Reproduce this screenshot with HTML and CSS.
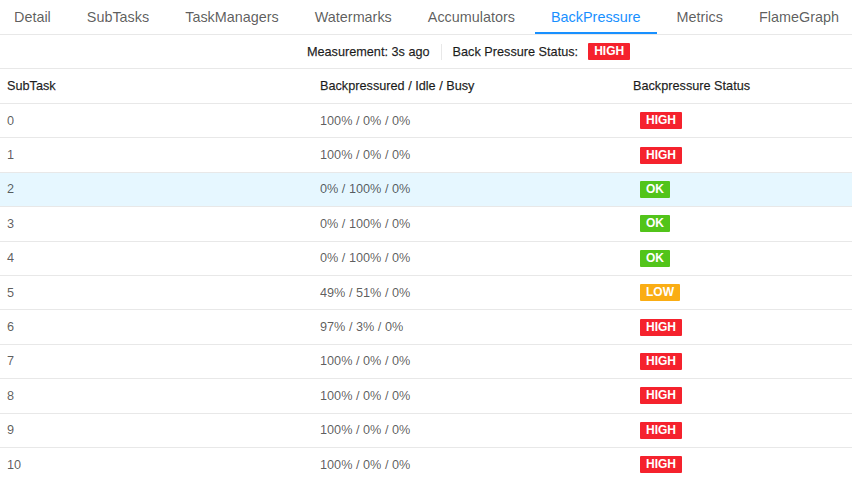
FILE: index.html
```html
<!DOCTYPE html>
<html lang="en">
<head>
    <meta charset="UTF-8">
    <title>BackPressure</title>
    <link rel="stylesheet" href="styles.css">
</head>
<body>
    <div class="tabs">
        <div class="tab">Detail</div>
        <div class="tab">SubTasks</div>
        <div class="tab">TaskManagers</div>
        <div class="tab">Watermarks</div>
        <div class="tab">Accumulators</div>
        <div class="tab active">BackPressure</div>
        <div class="tab">Metrics</div>
        <div class="tab">FlameGraph</div>
    </div>

    <div class="summary">
        <span class="summary-item">Measurement: 3s ago</span>
        <span class="divider"></span>
        <span class="summary-item">Back Pressure Status:</span>
        <span class="tag high">HIGH</span>
    </div>

    <table class="bp-table">
        <thead>
            <tr>
                <th>SubTask</th>
                <th>Backpressured / Idle / Busy</th>
                <th>Backpressure Status</th>
            </tr>
        </thead>
        <tbody>
            <tr><td>0</td><td>100% / 0% / 0%</td><td><span class="tag high">HIGH</span></td></tr>
            <tr><td>1</td><td>100% / 0% / 0%</td><td><span class="tag high">HIGH</span></td></tr>
            <tr class="hover"><td>2</td><td>0% / 100% / 0%</td><td><span class="tag ok">OK</span></td></tr>
            <tr><td>3</td><td>0% / 100% / 0%</td><td><span class="tag ok">OK</span></td></tr>
            <tr><td>4</td><td>0% / 100% / 0%</td><td><span class="tag ok">OK</span></td></tr>
            <tr><td>5</td><td>49% / 51% / 0%</td><td><span class="tag low">LOW</span></td></tr>
            <tr><td>6</td><td>97% / 3% / 0%</td><td><span class="tag high">HIGH</span></td></tr>
            <tr><td>7</td><td>100% / 0% / 0%</td><td><span class="tag high">HIGH</span></td></tr>
            <tr><td>8</td><td>100% / 0% / 0%</td><td><span class="tag high">HIGH</span></td></tr>
            <tr><td>9</td><td>100% / 0% / 0%</td><td><span class="tag high">HIGH</span></td></tr>
            <tr><td>10</td><td>100% / 0% / 0%</td><td><span class="tag high">HIGH</span></td></tr>
        </tbody>
    </table>
</body>
</html>
```

FILE: styles.css
```css
body {
    font-family: "Liberation Sans", Arial, sans-serif;
    font-size: 12.7px;
    margin: 0;
    background-color: #fff;
    color: rgba(0,0,0,0.65);
}
.tabs {
    display: flex;
    height: 34px;
    border-bottom: 1px solid #e8e8e8;
    margin-left: -2px;
}
.tab {
    padding: 0 16px;
    margin-right: 4px;
    font-size: 14.4px;
    line-height: 34px;
    color: rgba(0,0,0,0.65);
    white-space: nowrap;
    box-sizing: border-box;
    height: 34px;
}
.tab.active {
    color: #1890ff;
    border-bottom: 2px solid #1890ff;
}
.summary {
    display: flex;
    align-items: center;
    justify-content: center;
    height: 33px;
    padding-left: 85px;
    border-bottom: 1px solid #e8e8e8;
    color: rgba(0,0,0,0.85);
    -webkit-text-stroke: 0.25px rgba(0,0,0,0.85);
}
.divider {
    width: 1px;
    height: 16px;
    background-color: #e8e8e8;
    margin: 0 11px;
}
.summary .tag {
    margin-left: 10px;
    -webkit-text-stroke: 0;
}
.tag {
    display: inline-block;
    height: 17px;
    line-height: 17px;
    padding: 0 6px;
    font-size: 12px;
    font-weight: bold;
    color: #fff;
    border-radius: 1px;
}
.tag.high { background-color: #f5222d; }
.tag.ok { background-color: #52c41a; }
.tag.low { background-color: #faad14; }
.bp-table {
    width: 100%;
    border-collapse: collapse;
    table-layout: fixed;
}
.bp-table th {
    text-align: left;
    font-weight: normal;
    color: rgba(0,0,0,0.85);
    -webkit-text-stroke: 0.25px rgba(0,0,0,0.85);
    height: 34px;
    padding: 0 7px;
    border-bottom: 1px solid #e8e8e8;
}
.bp-table th:nth-child(1) { width: 299px; }
.bp-table th:nth-child(2) { width: 299px; }
.bp-table td {
    height: 33.4px;
    padding: 0 7px;
    border-bottom: 1px solid #e8e8e8;
}
.bp-table td .tag {
    margin-left: 7px;
}
.bp-table tr.hover td {
    background-color: #e6f7ff;
}
```
